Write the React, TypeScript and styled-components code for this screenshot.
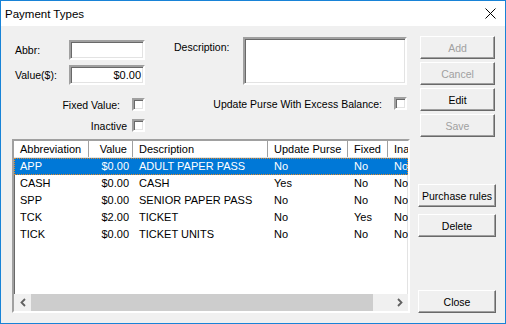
import React from 'react';
import styled, { createGlobalStyle, css } from 'styled-components';

const GlobalStyle = createGlobalStyle`
  * { box-sizing: border-box; }
  html, body { margin: 0; padding: 0; background: #f0f0f0; }
  body { font-family: "Liberation Sans", Arial, sans-serif; font-size: 10.5px; color: #000; }
`;

const sunken = css`
  border: 2px solid;
  border-color: #a0a0a0 #ffffff #ffffff #a0a0a0;
  box-shadow: inset 1px 1px 0 #696969, inset -1px -1px 0 #e3e3e3;
`;

const Window = styled.div`
  width: 506px;
  height: 324px;
  border: 1px solid #1883d7;
  display: flex;
  flex-direction: column;
  background: #f0f0f0;
`;

const TitleBar = styled.div`
  height: 25px;
  background: #ffffff;
  display: flex;
  align-items: center;
  justify-content: space-between;
  padding: 0 9px 0 4px;
  font-size: 11.5px;
`;

const Body = styled.div`
  flex: 1;
  display: grid;
  grid-template-columns: 398px 79px;
  column-gap: 8px;
  padding: 10px 0 10px 11px;
`;

const MainColumn = styled.div`
  display: flex;
  flex-direction: column;
`;

const FormArea = styled.div`
  height: 103px;
  display: flex;
  align-items: flex-start;
`;

const LeftForm = styled.div`
  width: 130px;
  margin-left: 3px;
  padding-top: 4px;
  display: flex;
  flex-direction: column;
`;

const FieldRow = styled.div<{ $top?: number }>`
  display: flex;
  align-items: center;
  height: 20px;
  margin-top: ${({ $top }) => $top ?? 0}px;
`;

const Label = styled.span<{ $width?: number }>`
  width: ${({ $width }) => ($width ? `${$width}px` : 'auto')};
  white-space: nowrap;
`;

const TextBox = styled.div<{ $align?: string }>`
  ${sunken};
  width: 76px;
  height: 20px;
  background: #ffffff;
  padding: 1px 2px 0;
  text-align: ${({ $align }) => $align ?? 'left'};
  line-height: 15px;
  font-size: 11px;
`;

const CheckRow = styled.div<{ $top: number; $gap: number }>`
  display: flex;
  justify-content: flex-end;
  align-items: center;
  gap: ${({ $gap }) => $gap}px;
  margin-top: ${({ $top }) => $top}px;
  height: 13px;
  white-space: nowrap;
`;

const CheckBox = styled.span`
  ${sunken};
  width: 13px;
  height: 13px;
  background: #ffffff;
  flex: none;
`;

const RightForm = styled.div`
  width: 233px;
  margin-left: 29px;
  margin-top: 1px;
  display: flex;
  flex-direction: column;
`;

const DescRow = styled.div`
  display: flex;
  align-items: flex-start;
`;

const DescLabel = styled.span`
  width: 69px;
  padding-top: 4px;
`;

const TextArea = styled.div`
  ${sunken};
  width: 164px;
  height: 48px;
  background: #ffffff;
`;

const ListView = styled.div`
  ${sunken};
  flex: 1;
  background: #ffffff;
  display: flex;
  flex-direction: column;
  overflow: hidden;
  font-size: 11px;
`;

const columns = '75px 44px 135px 80px 40px 60px';

const HeaderRow = styled.div`
  display: grid;
  grid-template-columns: ${columns};
  height: 17px;
  width: 394px;
  overflow: hidden;
  background: #ffffff;
  border-bottom: 1px solid #e5e5e5;
`;

const HeaderCell = styled.div<{ $right?: boolean }>`
  border-right: 1px solid #a0a0a0;
  box-shadow: inset -2px 0 0 #ffffff;
  padding: 0 ${({ $right }) => ($right ? '5px' : '6px')};
  line-height: 16px;
  text-align: ${({ $right }) => ($right ? 'right' : 'left')};
  white-space: nowrap;
  overflow: hidden;
`;

const Rows = styled.div`
  flex: 1;
`;

const Row = styled.div<{ $selected?: boolean }>`
  display: grid;
  grid-template-columns: ${columns};
  height: 17px;
  width: 394px;
  overflow: hidden;
  line-height: 17px;
  ${({ $selected }) =>
    $selected &&
    css`
      background: #0078d7;
      color: #ffffff;
      outline: 1px dotted #e08a2c;
      outline-offset: -1px;
    `}
`;

const Cell = styled.div<{ $right?: boolean }>`
  padding: 0 ${({ $right }) => ($right ? '4px' : '6px')};
  text-align: ${({ $right }) => ($right ? 'right' : 'left')};
  white-space: nowrap;
  overflow: hidden;
`;

const ScrollBar = styled.div`
  height: 17px;
  display: flex;
  background: #f0f0f0;
`;

const ScrollArrow = styled.div`
  width: 17px;
  display: flex;
  align-items: center;
  justify-content: center;
`;

const ScrollTrack = styled.div`
  flex: 1;
  display: flex;
`;

const ScrollThumb = styled.div`
  width: 342px;
  background: #cdcdcd;
`;

const ButtonColumn = styled.div`
  display: flex;
  flex-direction: column;
`;

const Button = styled.div<{ $disabled?: boolean; $top?: number; $inset?: boolean }>`
  height: 23px;
  width: ${({ $inset }) => ($inset ? '75px' : '78px')};
  margin-left: ${({ $inset }) => ($inset ? '2px' : '0')};
  margin-top: ${({ $top }) => $top ?? 0}px;
  background: #f0f0f0;
  border: 1px solid;
  border-color: #ffffff #696969 #696969 #ffffff;
  box-shadow: inset -1px -1px 0 #a0a0a0;
  display: flex;
  align-items: center;
  justify-content: center;
  color: ${({ $disabled }) => ($disabled ? '#a0a0a0' : '#000000')};
  white-space: nowrap;
`;

const CloseButton = styled(Button)`
  margin-top: auto;
`;

const rows = [
  ['APP', '$0.00', 'ADULT PAPER PASS', 'No', 'No', 'No'],
  ['CASH', '$0.00', 'CASH', 'Yes', 'No', 'No'],
  ['SPP', '$0.00', 'SENIOR PAPER PASS', 'No', 'No', 'No'],
  ['TCK', '$2.00', 'TICKET', 'No', 'Yes', 'No'],
  ['TICK', '$0.00', 'TICKET UNITS', 'No', 'No', 'No'],
];

const headers = ['Abbreviation', 'Value', 'Description', 'Update Purse', 'Fixed', 'Inactive'];

const Chevron: React.FC<{ dir: 'left' | 'right' }> = ({ dir }) => (
  <svg width="6" height="9" viewBox="0 0 6 9">
    <path
      d={dir === 'left' ? 'M5 1 L1.5 4.5 L5 8' : 'M1 1 L4.5 4.5 L1 8'}
      fill="none"
      stroke="#606060"
      strokeWidth="1.8"
    />
  </svg>
);

const App: React.FC = () => {
  return (
    <>
      <GlobalStyle />
      <Window>
        <TitleBar>
          <span>Payment Types</span>
          <svg width="11" height="11" viewBox="0 0 11 11">
            <path d="M0.5 0.5 L10.5 10.5 M10.5 0.5 L0.5 10.5" stroke="#000" strokeWidth="1" />
          </svg>
        </TitleBar>

        <Body>
          <MainColumn>
            <FormArea>
              <LeftForm>
                <FieldRow>
                  <Label $width={54}>Abbr:</Label>
                  <TextBox />
                </FieldRow>
                <FieldRow $top={5}>
                  <Label $width={54}>Value($):</Label>
                  <TextBox $align="right">$0.00</TextBox>
                </FieldRow>
                <CheckRow $top={13} $gap={12}>
                  <Label>Fixed Value:</Label>
                  <CheckBox />
                </CheckRow>
                <CheckRow $top={8} $gap={5}>
                  <Label>Inactive</Label>
                  <CheckBox />
                </CheckRow>
              </LeftForm>

              <RightForm>
                <DescRow>
                  <DescLabel>Description:</DescLabel>
                  <TextArea />
                </DescRow>
                <CheckRow $top={12} $gap={12}>
                  <Label>Update Purse With Excess Balance:</Label>
                  <CheckBox />
                </CheckRow>
              </RightForm>
            </FormArea>

            <ListView>
              <HeaderRow>
                {headers.map((h, i) => (
                  <HeaderCell key={h} $right={i === 1}>{h}</HeaderCell>
                ))}
              </HeaderRow>
              <Rows>
                {rows.map((r, i) => (
                  <Row key={r[0]} $selected={i === 0}>
                    {r.map((c, j) => (
                      <Cell key={j} $right={j === 1}>{c}</Cell>
                    ))}
                  </Row>
                ))}
              </Rows>
              <ScrollBar>
                <ScrollArrow><Chevron dir="left" /></ScrollArrow>
                <ScrollTrack><ScrollThumb /></ScrollTrack>
                <ScrollArrow><Chevron dir="right" /></ScrollArrow>
              </ScrollBar>
            </ListView>
          </MainColumn>

          <ButtonColumn>
            <Button $inset $disabled>Add</Button>
            <Button $inset $disabled $top={3}>Cancel</Button>
            <Button $inset $top={3}>Edit</Button>
            <Button $inset $disabled $top={3}>Save</Button>
            <Button $top={47}>Purchase rules</Button>
            <Button $top={7}>Delete</Button>
            <CloseButton>Close</CloseButton>
          </ButtonColumn>
        </Body>
      </Window>
    </>
  );
};

export default App;
